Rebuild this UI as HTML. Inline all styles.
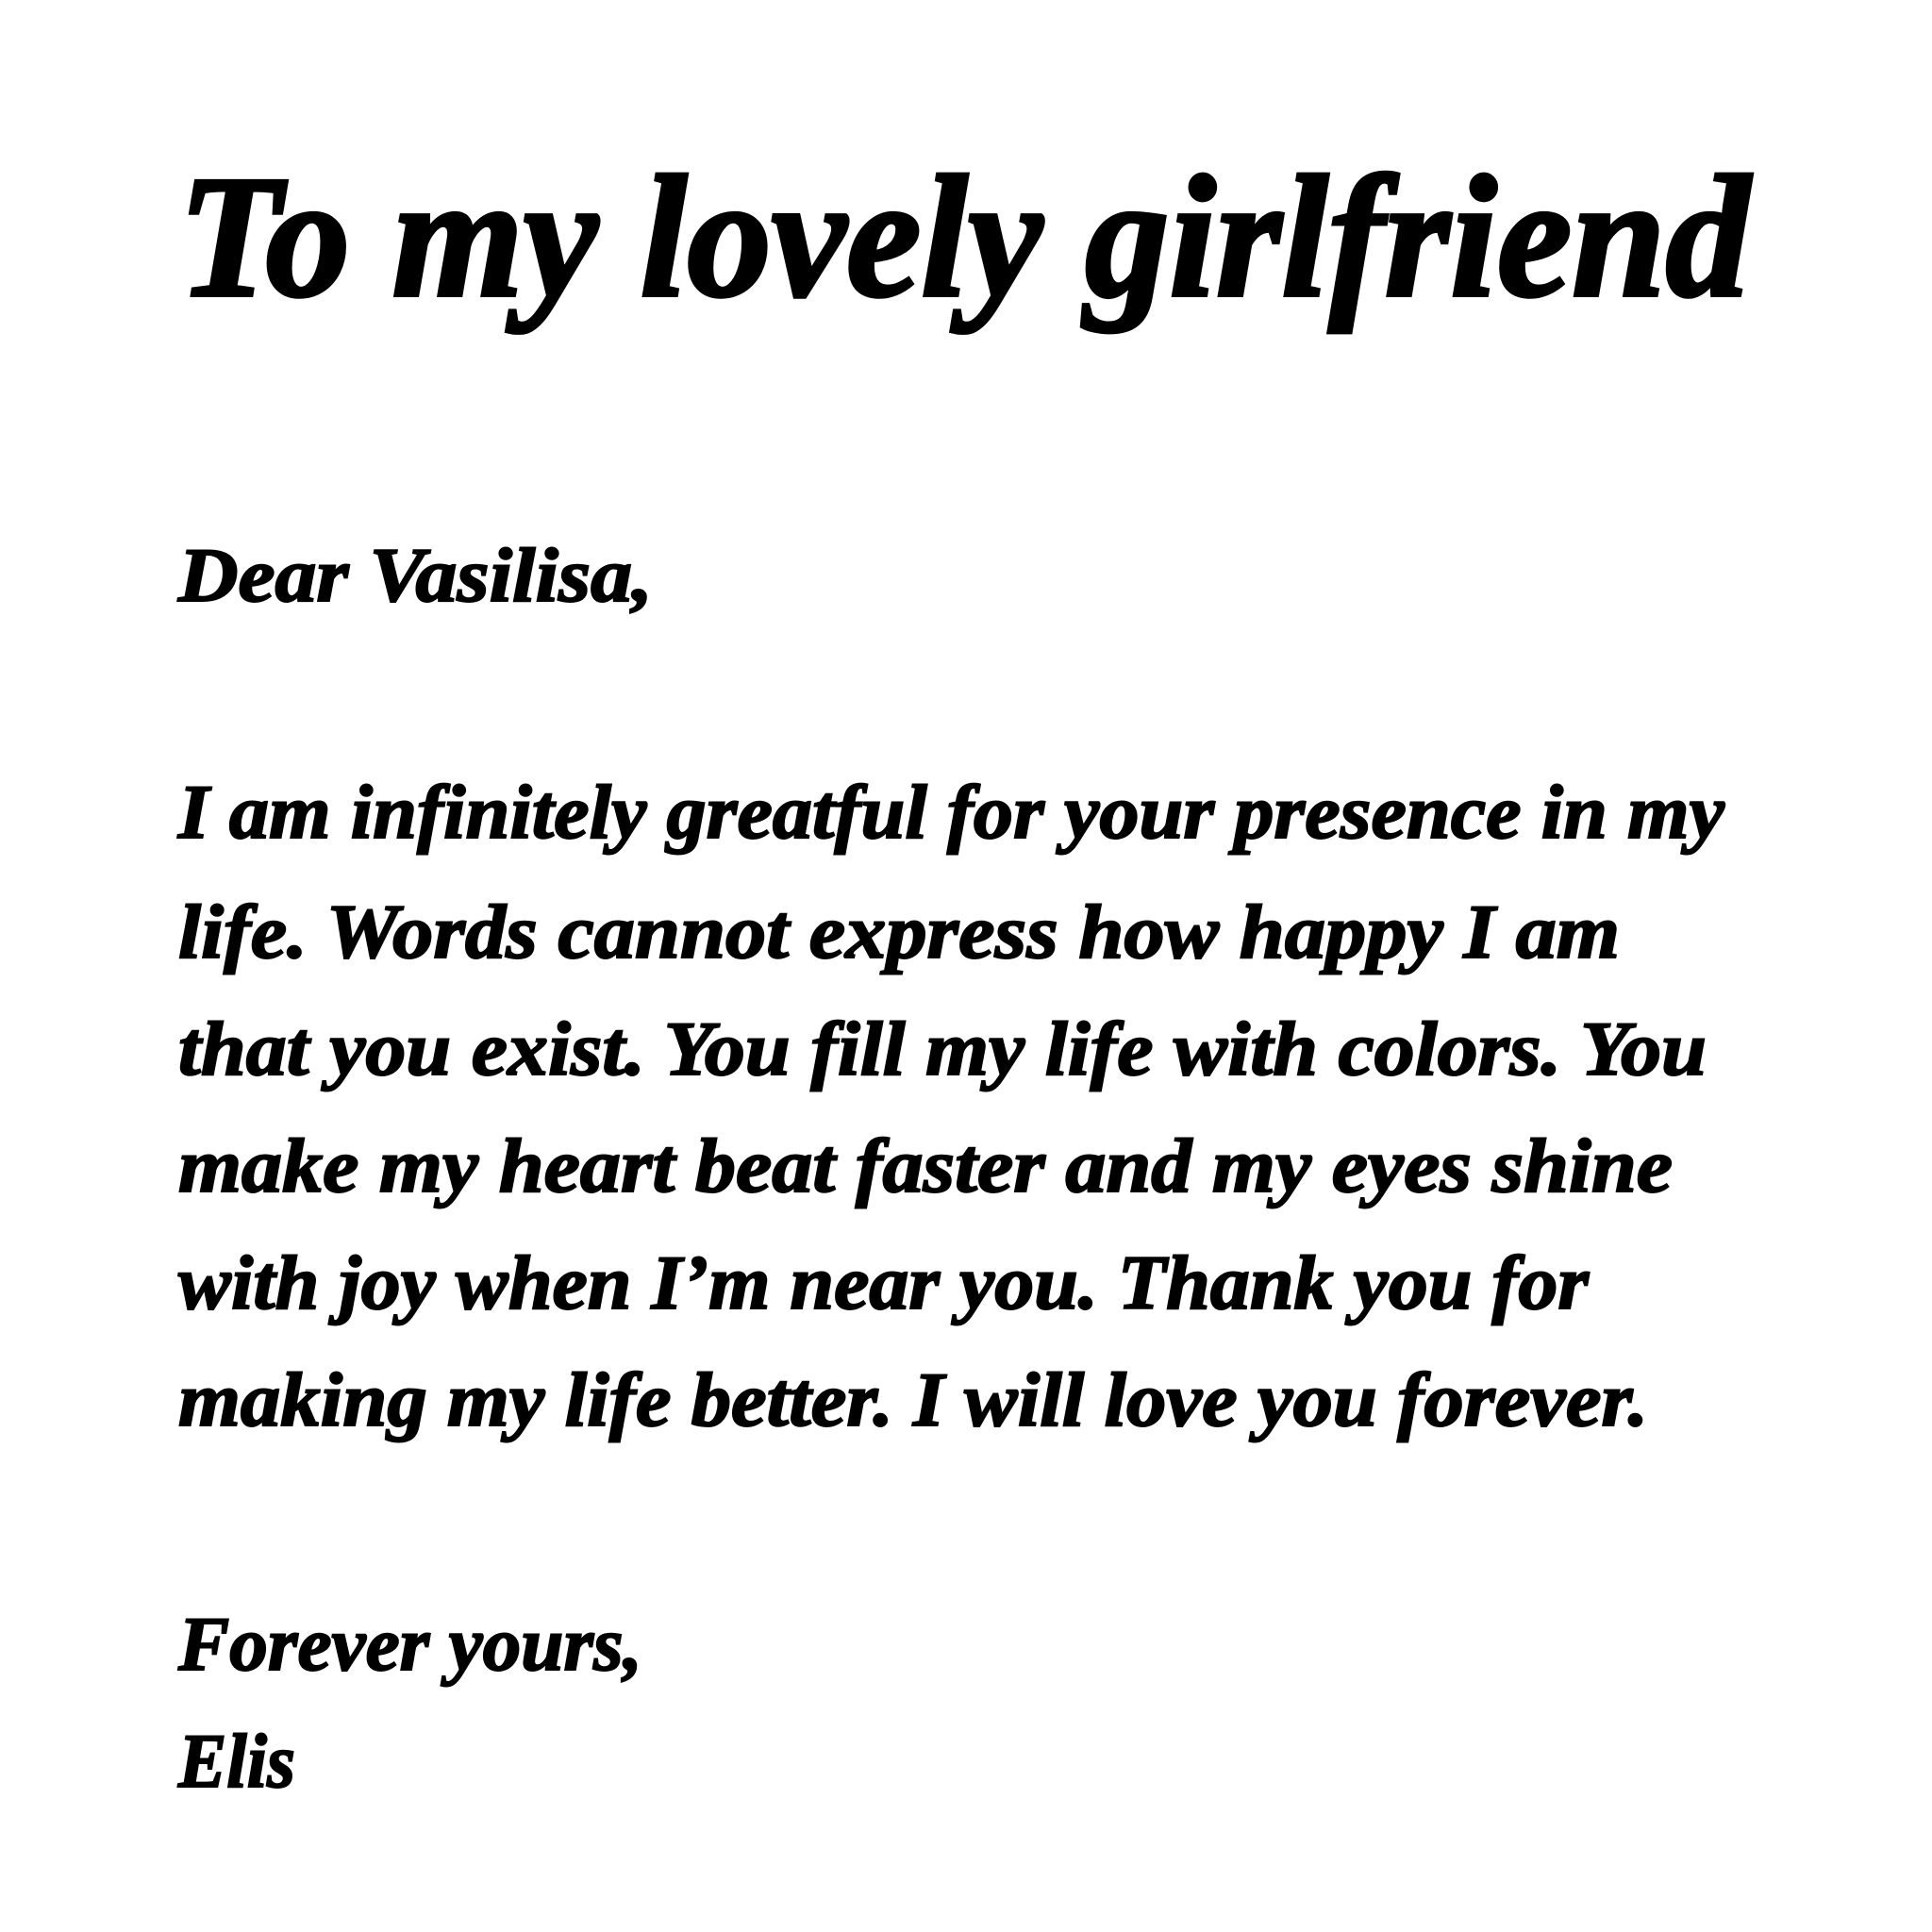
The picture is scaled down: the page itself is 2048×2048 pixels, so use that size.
<!DOCTYPE html>
<html>
<head>
<meta charset="utf-8">
<style>
html,body{margin:0;padding:0;background:#fff;}
svg{display:block;}
text{font-family:"Liberation Serif",serif;font-style:italic;font-weight:bold;fill:#000;stroke:#000;stroke-width:2;}
text.t{stroke-width:4;}
</style>
</head>
<body>
<svg width="2048" height="2048" viewBox="0 0 2048 2048" xmlns="http://www.w3.org/2000/svg">
<rect width="2048" height="2048" fill="#fff"/>
<text class="t" x="189" y="313" font-size="185" textLength="1666" lengthAdjust="spacingAndGlyphs">To my lovely girlfriend</text>
<text x="189" y="637" font-size="82" textLength="503" lengthAdjust="spacingAndGlyphs">Dear Vasilisa,</text>
<text x="189" y="888" font-size="82" textLength="1639" lengthAdjust="spacingAndGlyphs">I am infinitely greatful for your presence in my</text>
<text x="189" y="1015" font-size="82" textLength="1528" lengthAdjust="spacingAndGlyphs">life. Words cannot express how happy I am</text>
<text x="189" y="1139" font-size="82" textLength="1620" lengthAdjust="spacingAndGlyphs">that you exist. You fill my life with colors. You</text>
<text x="189" y="1263" font-size="82" textLength="1584" lengthAdjust="spacingAndGlyphs">make my heart beat faster and my eyes shine</text>
<text x="189" y="1387" font-size="82" textLength="1495" lengthAdjust="spacingAndGlyphs">with joy when I’m near you. Thank you for</text>
<text x="189" y="1511" font-size="82" textLength="1558" lengthAdjust="spacingAndGlyphs">making my life better. I will love you forever.</text>
<text x="189" y="1770" font-size="82" textLength="492" lengthAdjust="spacingAndGlyphs">Forever yours,</text>
<text x="189" y="1894" font-size="82" textLength="124" lengthAdjust="spacingAndGlyphs">Elis</text>
</svg>
</body>
</html>
